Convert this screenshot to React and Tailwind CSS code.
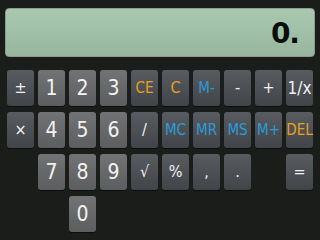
import React from "react";

const F = "f", D = "d";
const rows = [
  [["±", F, "w"], ["1", D], ["2", D], ["3", D], ["CE", F, "o"], ["C", F, "o"], ["M-", F, "b"], ["-", F, "w"], ["+", F, "w"], ["1/x", F, "w"]],
  [["×", F, "w"], ["4", D], ["5", D], ["6", D], ["/", F, "w"], ["MC", F, "b"], ["MR", F, "b"], ["MS", F, "b"], ["M+", F, "b"], ["DEL", F, "o"]],
  [null, ["7", D], ["8", D], ["9", D], ["√", F, "w"], ["%", F, "w"], [",", F, "w"], [".", F, "w"], null, ["=", F, "w"]],
  [null, null, ["0", D]],
];

function Key({ k }) {
  if (!k) return <div />;
  const [label, kind, color] = k;
  const bg = kind === D
    ? "bg-gradient-to-b from-[#727375] to-[#5c5d5f]"
    : "bg-gradient-to-b from-[#585b60] to-[#414448]";
  const col = color === "o" ? "text-[#e6a21c]" : color === "b" ? "text-[#2b9bdc]" : "text-[#f2f2f2]";
  const size = kind === D
    ? "text-[21px]"
    : label === "1/x"
    ? "text-[17px]"
    : label.length > 1
    ? "text-[15px]"
    : "text-[16px]";
  return (
    <div
      className={`${bg} ${col} ${size} rounded-[3px] flex items-center justify-center leading-none font-stretch-condensed shadow-[0_1px_0_rgba(0,0,0,0.5)]`}
      style={{ fontFamily: '"DejaVu Sans Condensed", "DejaVu Sans", sans-serif' }}
    >
      {label}
    </div>
  );
}

export default function App() {
  return (
    <div className="w-[320px] h-[240px] bg-[#1b1d1b] overflow-hidden" style={{ fontFamily: '"DejaVu Sans", sans-serif' }}>
      <div className="pt-[8px] px-[5px]">
        <div className="h-[49px] rounded-[4px] border border-[#8d9c8f] bg-gradient-to-b from-[#a8c9b0] to-[#98b69e] flex items-center justify-end pr-[15px] pt-[3px]">
          <span className="text-[28px] font-bold text-[#0c0e0c] leading-none tracking-[-1px]">0.</span>
        </div>
      </div>
      <div className="mt-[13px] pl-[7px] grid grid-cols-[repeat(10,27px)] auto-rows-[36px] gap-x-[4px] gap-y-[6px]">
        {rows.map((r, i) => {
          const cells = [...r];
          while (cells.length < 10) cells.push(null);
          return cells.map((k, j) => <Key key={`${i}-${j}`} k={k} />);
        })}
      </div>
    </div>
  );
}
